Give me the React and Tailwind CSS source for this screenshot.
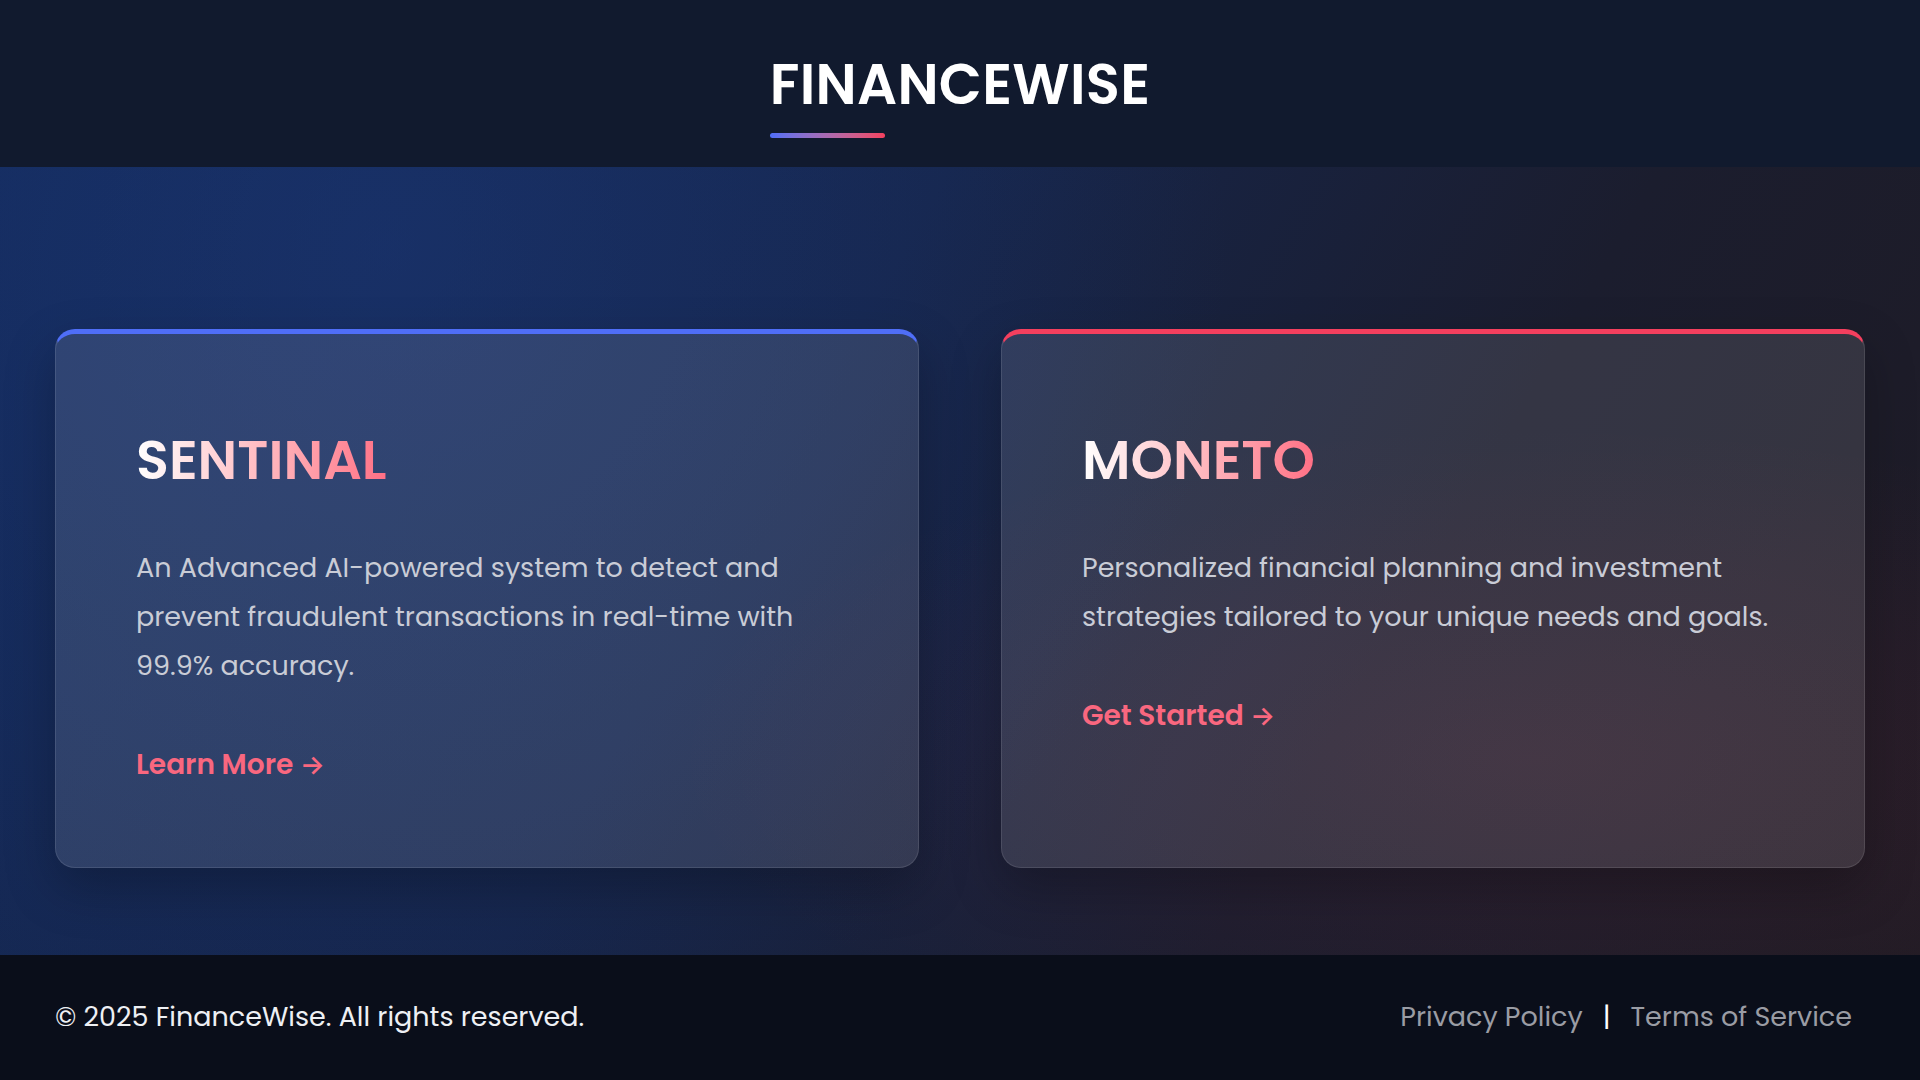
import React from "react";

const products = [
  {
    name: "SENTINAL",
    accent: "border-t-[#4f6ef7]",
    text: "An Advanced AI-powered system to detect and prevent fraudulent transactions in real-time with 99.9% accuracy.",
    cta: "Learn More",
  },
  {
    name: "MONETO",
    accent: "border-t-[#f43f5e]",
    text: "Personalized financial planning and investment strategies tailored to your unique needs and goals.",
    cta: "Get Started",
  },
];

const ProductCard = ({ product }) => (
  <div
    className={`rounded-[20px] border border-white/10 border-t-[5px] ${product.accent} bg-white/[0.11] pt-[94px] px-[80px] shadow-[0_20px_50px_rgba(0,0,0,0.25)]`}
  >
    <h2 className="inline-block bg-gradient-to-r from-white to-[#ff6f85] bg-clip-text text-[54px] leading-[1.2] font-semibold text-transparent">
      {product.name}
    </h2>
    <p className="mt-[50px] text-[27px] leading-[49px] text-[#c9ccd6]">{product.text}</p>
    <a href="#" className="mt-[54px] inline-block text-[28px] leading-[42px] font-semibold text-[#f9677f]">
      {product.cta} <span className="text-[26px]">→</span>
    </a>
  </div>
);

export default function App() {
  return (
    <div className="flex h-[1080px] w-full flex-col font-['Poppins','Inter',sans-serif] text-white">
      {/* Header */}
      <header className="flex h-[167px] shrink-0 items-start justify-center bg-[#111a2e] pt-[51px]">
        <div className="inline-block">
          <h1 className="text-[56px] leading-[1.2] font-semibold tracking-[0.3px] text-white">FINANCEWISE</h1>
          <div className="mt-[15px] h-[5px] w-[115px] rounded-full bg-gradient-to-r from-[#4f6ef7] to-[#f43f5e]" />
        </div>
      </header>

      {/* Products */}
      <main className="flex-1 bg-[radial-gradient(ellipse_at_80%_75%,rgba(244,63,94,0.08),transparent_40%),radial-gradient(circle_at_20%_10%,rgba(30,64,140,0.35),transparent_50%),linear-gradient(120deg,#142a5a_0%,#16254a_40%,#1b1d2e_70%,#1f1b24_100%)] px-[55px] pt-[162px]">
        <div className="grid h-[539px] grid-cols-2 gap-[82px]">
          {products.map((p) => (
            <ProductCard key={p.name} product={p} />
          ))}
        </div>
      </main>

      {/* Footer */}
      <footer className="flex h-[125px] shrink-0 items-center justify-between bg-[#0a0e1a] pl-[55px] pr-[68px] text-[27px]">
        <p className="text-[#eef0f4]">© 2025 FinanceWise. All rights reserved.</p>
        <div className="flex items-center gap-[20px] text-[#9a9ca4]">
          <a href="#">Privacy Policy</a>
          <span className="text-white">|</span>
          <a href="#">Terms of Service</a>
        </div>
      </footer>
    </div>
  );
}
